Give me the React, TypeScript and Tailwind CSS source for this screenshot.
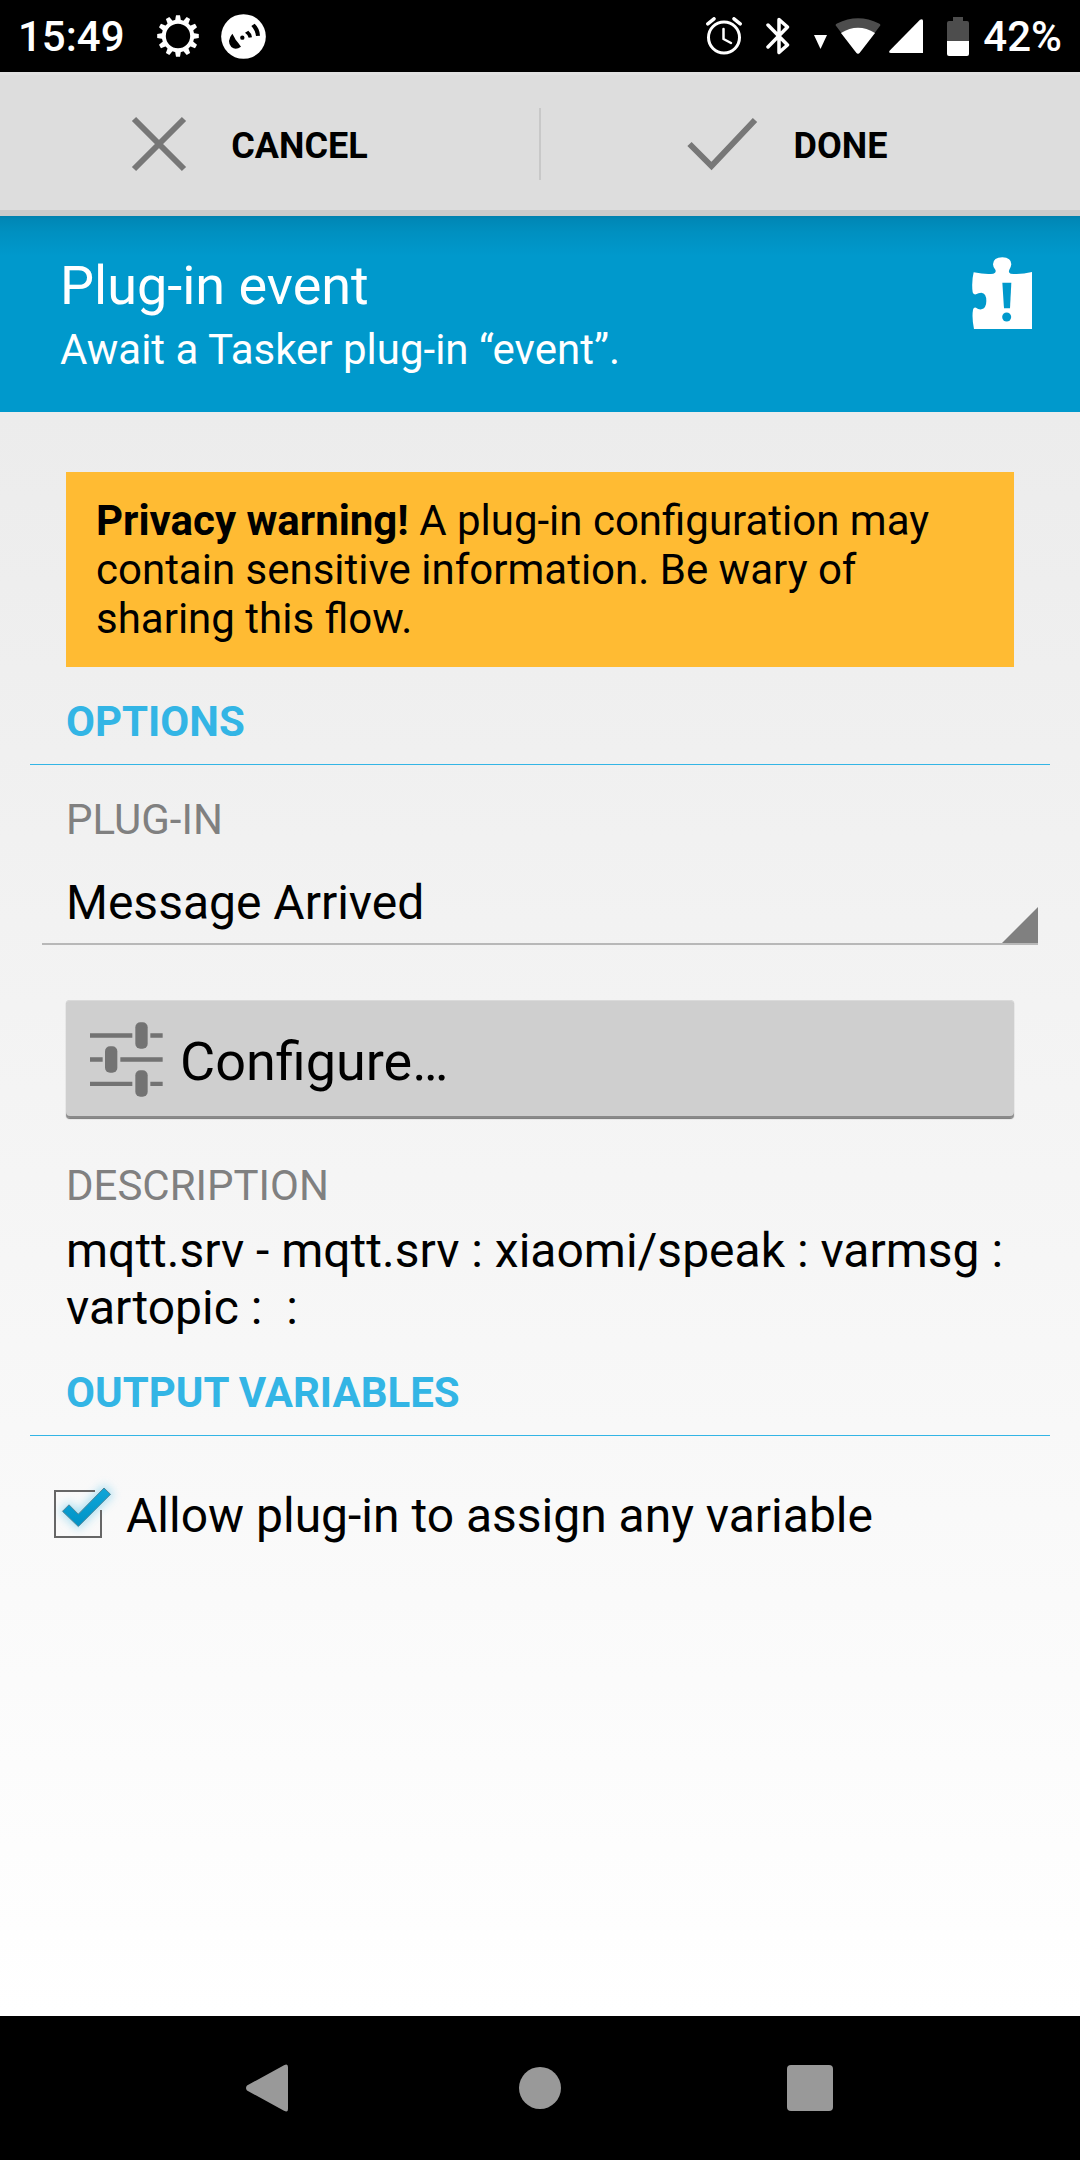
import { useState } from "react";
import type { ReactNode } from "react";

const GEAR_ANGLES = [0, 30, 60, 90, 120, 150, 180, 210, 240, 270, 300, 330];

function GearIcon() {
  return (
    <svg className="h-[42px] w-[42px]" viewBox="-21 -21 42 42" fill="white" aria-hidden="true">
      <circle r="14.2" fill="none" stroke="white" strokeWidth="4" />
      {GEAR_ANGLES.map((a) => (
        <path key={a} d="M-3 -15 L-2 -20.8 H2 L3 -15 Z" transform={`rotate(${a})`} />
      ))}
    </svg>
  );
}

function BroadcastIcon() {
  return (
    <svg className="h-[45px] w-[45px]" viewBox="666 39 135 135" aria-hidden="true">
      <circle cx="733.5" cy="106.500" r="67" fill="white" />
      <path d="M700 98 Q706 108 710 116 Q717 124 726 137 Q710 149 697 138 Q682 120 700 98 Z" fill="black" />
      <circle cx="730" cy="110" r="6.500" fill="black" />
      <path d="M738 95 L748 89 Q758 97 759 109 L749 110 Q747 101 738 95 Z" fill="black" />
      <path d="M757 75 L767 68 Q782 82 783 104 L771 105 Q769 88 757 75 Z" fill="black" />
    </svg>
  );
}

function AlarmIcon() {
  return (
    <svg
      className="h-[38px] w-[36px]"
      viewBox="0 0 36 38"
      fill="none"
      stroke="white"
      strokeWidth="3"
      strokeLinecap="round"
      aria-hidden="true"
    >
      <circle cx="18" cy="20.500" r="15.500" />
      <path d="M17.500 12 V22 L25 26" strokeWidth="2.500" strokeLinejoin="round" />
      <path d="M1.800 6.800 L8 1.800 M28 1.800 L34.200 6.800" strokeWidth="3.500" />
    </svg>
  );
}

function BluetoothIcon() {
  return (
    <svg
      className="h-[38px] w-[24px]"
      viewBox="0 0 24 38"
      fill="none"
      stroke="white"
      strokeWidth="3.500"
      strokeLinecap="round"
      strokeLinejoin="round"
      aria-hidden="true"
    >
      <path d="M2 8 L21.500 28 L13 35.500 V2.500 L21.500 10 L2 30" />
    </svg>
  );
}

function WifiIcon() {
  return (
    <svg className="h-[36px] w-[46px]" viewBox="0 0 46 36" aria-hidden="true">
      <path d="M1.500 8.500 Q-0.500 6.500 2 5.500 Q23 -5 44 5.500 Q46.500 6.500 44.500 8.500 L24.500 35 Q23 36.500 21.500 35 Z" fill="#4d4d4d" />
      <path d="M6 15 Q23 4.500 40 15 L24.500 35 Q23 36.500 21.500 35 Z" fill="white" />
    </svg>
  );
}

function BatteryIcon() {
  return (
    <svg className="h-[39px] w-[22px]" viewBox="0 0 22 39" aria-hidden="true">
      <path d="M6 0 H16 V4 H20 Q22 4 22 6 V24 H0 V6 Q0 4 2 4 H6 Z" fill="#4d4d4d" />
      <path d="M0 24 H22 V37 Q22 39 20 39 H2 Q0 39 0 37 Z" fill="white" />
    </svg>
  );
}

function StatusBar() {
  return (
    <header className="flex h-[72px] items-center justify-between bg-black px-[18px] text-[42px] leading-[50px] font-medium text-white">
      <div className="flex items-center">
        <time className="mr-8 pt-[2px]">15:49</time>
        <div className="flex items-center gap-[22px]">
          <GearIcon />
          <BroadcastIcon />
        </div>
      </div>
      <div className="flex items-center gap-[14px]">
        <div className="flex items-center gap-6">
          <AlarmIcon />
          <BluetoothIcon />
          <div className="flex items-center gap-2">
            <svg className="mt-[12px] h-[14px] w-[13px]" viewBox="0 0 13 14" fill="white" aria-hidden="true">
              <path d="M0 0 H13 L6.500 14 Z" />
            </svg>
            <WifiIcon />
            <svg className="h-[34px] w-[34px]" viewBox="0 0 34 34" fill="white" aria-hidden="true">
              <path d="M31 0.800 Q34 -1 34 2 V34 H2 Q-1 34 0.800 31.500 Z" />
            </svg>
          </div>
          <BatteryIcon />
        </div>
        <span className="pt-[2px]">42%</span>
      </div>
    </header>
  );
}

function ActionButton({ label, path }: { label: string; path: string }) {
  return (
    <button
      type="button"
      className="flex flex-1 items-center justify-center gap-6 pr-[60px] text-[36px] leading-[42px] font-bold text-black uppercase"
    >
      <svg className="h-[96px] w-[96px]" viewBox="0 0 96 96" fill="none" stroke="#777777" strokeWidth="6" aria-hidden="true">
        <path d={path} />
      </svg>
      <span className="pt-1">{label}</span>
    </button>
  );
}

function ActionBar() {
  return (
    <div className="flex h-[144px] items-stretch bg-[#dddddd] shadow-[inset_0_3px_0_#e1e1e1,inset_0_-6px_0_#cbcbcb]">
      <ActionButton label="Cancel" path="M23 23 L73 73 M73 23 L23 73" />
      <div className="h-[72px] w-[2px] self-center bg-[#c8c8c8]" />
      <ActionButton label="Done" path="M15.500 48 L37.500 70 L81 24" />
    </div>
  );
}

function PuzzleIcon() {
  return (
    <svg className="mt-[3px] h-[72px] w-[60px] shrink-0" viewBox="96 80 180 216" aria-hidden="true">
      <path
        fill="white"
        d="M101 126 Q140 134 160 130 Q170 127 166 118 Q159 110 159 102 Q160 81 187 81 Q214 82 214 102 Q213 110 208 118 Q204 128 212 130 Q240 134 276 125 V296 H102 Q95 262 99 238 Q101 230 108 232 Q115 238 124 237 Q139 234 139 212 Q139 188 124 187 Q115 187 108 192 Q100 194 98 186 Q94 155 101 126 Z"
      />
      <path fill="#0099cc" d="M187 157 H214 L210 234 H192 Z" />
      <circle cx="200" cy="260" r="13.500" fill="#0099cc" />
    </svg>
  );
}

function TitleBar() {
  return (
    <div className="flex items-start justify-between bg-[#0099cc] bg-[linear-gradient(to_bottom,#0081ae_0px,#0087b6_3px,#0090c0_16px,#0099cc_40px)] py-[38px] pr-12 pl-[60px] text-white">
      <div className="flex flex-col gap-2">
        <h1 className="text-[54px] leading-[63px]">Plug-in event</h1>
        <p className="text-[42px] leading-[49px]">Await a Tasker plug-in “event”.</p>
      </div>
      <PuzzleIcon />
    </div>
  );
}

function SectionHeading({ children }: { children: ReactNode }) {
  return (
    <h2 className="mx-[30px] border-b border-[#33b5e5] pb-[18px] pl-9 text-[42px] leading-[49px] font-bold text-[#33b5e5] uppercase">
      {children}
    </h2>
  );
}

function SlidersIcon() {
  return (
    <svg className="h-[75px] w-[73px]" viewBox="149 124 219 225" fill="#737373" aria-hidden="true">
      <path d="M149 158 H276 V171 H149 Z M330 158 H367 V171 H330 Z" />
      <path d="M149 230 H187 V243 H149 Z M240 230 H367 V243 H240 Z" />
      <path d="M149 303 H276 V316 H149 Z M330 303 H367 V316 H330 Z" />
      <rect x="285" y="125" width="37" height="79" rx="15" />
      <rect x="194" y="197" width="37" height="79" rx="15" />
      <rect x="285" y="269" width="37" height="79" rx="15" />
    </svg>
  );
}

function AllowCheckbox() {
  const [checked, setChecked] = useState(true);
  return (
    <label className="mx-[54px] mt-12 flex items-center gap-6 text-[48px] leading-[56px] text-black">
      <span className="relative block h-12 w-12 shrink-0">
        <input
          type="checkbox"
          checked={checked}
          onChange={(e) => setChecked(e.target.checked)}
          className="block h-12 w-12 appearance-none"
        />
        <svg
          className="pointer-events-none absolute inset-0 h-12 w-12 overflow-visible"
          viewBox="0 0 48 48"
          aria-hidden="true"
        >
          <defs>
            <filter id="glow" x="-60%" y="-60%" width="220%" height="220%">
              <feGaussianBlur stdDeviation="5" />
            </filter>
            <linearGradient id="tick" x1="0" y1="0" x2="0" y2="1">
              <stop offset="0" stopColor="#10a6d8" />
              <stop offset="1" stopColor="#0092c6" />
            </linearGradient>
          </defs>
          {checked ? (
            <>
              <path
                d="M8 21.300 L15 14.300 L24.300 23.700 L50 -2.700 L57 4.300 L24.300 37 Z"
                fill="#7fd0ee"
                stroke="#7fd0ee"
                strokeWidth="4"
                filter="url(#glow)"
                opacity="0.65"
              />
              <path d="M41 1 H1 V47 H47 V20" fill="none" stroke="#666666" strokeWidth="2" />
              <path
                d="M8.500 21.300 L15 14.800 L24.300 24.200 L50 -2 L56.500 4.300 L24.300 36.500 Z"
                fill="url(#tick)"
                stroke="#4f8597"
                strokeWidth="1"
              />
            </>
          ) : (
            <path d="M1 1 H47 V47 H1 Z" fill="none" stroke="#666666" strokeWidth="2" />
          )}
        </svg>
      </span>
      <span className="pt-1">Allow plug-in to assign any variable</span>
    </label>
  );
}

function NavButton({ label, children }: { label: string; children: ReactNode }) {
  return (
    <button type="button" aria-label={label} className="flex w-1/4 items-center justify-center">
      <svg className="h-12 w-12" viewBox="0 0 48 48" fill="#999999" aria-hidden="true">
        {children}
      </svg>
    </button>
  );
}

export default function App() {
  return (
    <div className="flex min-h-screen flex-col font-['Roboto',sans-serif]">
      <StatusBar />
      <ActionBar />
      <TitleBar />
      <main className="flex-1 bg-linear-to-b from-[#ececec] to-white pt-[60px] pb-[60px]">
        <p className="mx-[66px] mb-[30px] bg-[#ffbb33] px-[30px] py-6 text-[42px] leading-[49px] text-black">
          <strong className="font-bold">Privacy warning!</strong> A plug-in configuration may contain sensitive
          information. Be wary of sharing this flow.
        </p>

        <SectionHeading>Options</SectionHeading>
        <label
          htmlFor="plugin"
          className="mx-[66px] mt-[30px] block text-[42px] leading-[49px] text-[#808080] uppercase"
        >
          Plug-in
        </label>
        <div className="relative mx-[42px] mt-[18px]">
          <select
            id="plugin"
            defaultValue="arrived"
            className="block h-[83px] w-full appearance-none rounded-none border-b-2 border-[#b8b8b8] bg-transparent px-6 text-[48px] leading-[56px] text-black"
          >
            <option value="arrived">Message Arrived</option>
          </select>
          <svg
            className="pointer-events-none absolute right-0 bottom-[2px] h-9 w-9"
            viewBox="0 0 36 36"
            fill="#808080"
            aria-hidden="true"
          >
            <path d="M36 0 V36 H0 Z" />
          </svg>
        </div>

        <div className="mx-[66px] mt-[55px] flex">
          <button
            type="button"
            className="flex h-[118px] flex-1 items-center gap-[17px] rounded-[4px] bg-[#cfcfcf] px-6 text-[54px] leading-[63px] text-black shadow-[inset_0_1px_0_#dadada,inset_0_-2px_0_#8a8a8a,0_1px_1px_#777777]"
          >
            <SlidersIcon />
            <span className="pt-1">Configure…</span>
          </button>
        </div>

        <h3 className="mx-[66px] mt-[43px] text-[42px] leading-[49px] text-[#808080] uppercase">Description</h3>
        <p className="mx-[66px] mt-3 mb-8 text-[48px] leading-[57px] whitespace-pre-wrap text-black">
          {"mqtt.srv - mqtt.srv : xiaomi/speak : varmsg : vartopic :  :"}
        </p>

        <SectionHeading>Output variables</SectionHeading>
        <AllowCheckbox />
      </main>
      <nav className="flex h-[144px] justify-center bg-black">
        <NavButton label="Back">
          <path d="M1 21.500 L38 1.200 Q42 -1 42 3 V45 Q42 49 38 46.800 L1 26.500 Q-1 24 1 21.500 Z" />
        </NavButton>
        <NavButton label="Home">
          <circle cx="24" cy="24" r="21" />
        </NavButton>
        <NavButton label="Recent apps">
          <rect x="1" y="1" width="46" height="46" rx="4" />
        </NavButton>
      </nav>
    </div>
  );
}
